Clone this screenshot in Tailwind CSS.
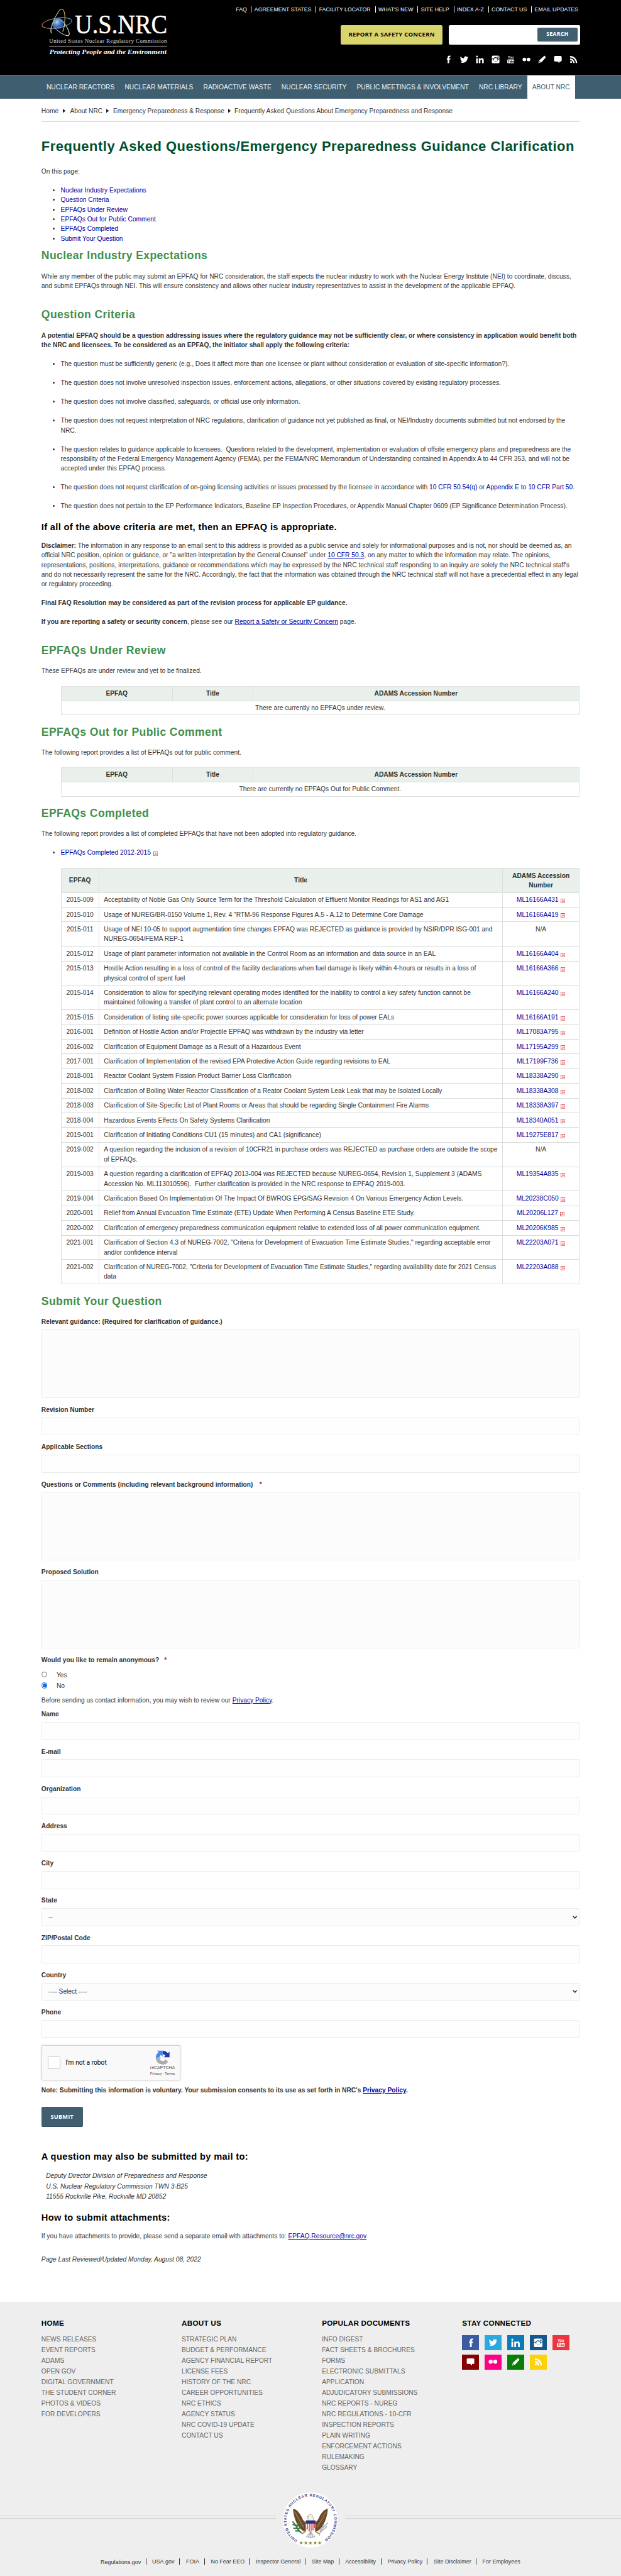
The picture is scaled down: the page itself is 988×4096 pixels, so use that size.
<!DOCTYPE html>
<html lang="en">
<head>
<meta charset="utf-8">
<title>Frequently Asked Questions/Emergency Preparedness Guidance Clarification</title>
<script src="https://cdn.jsdelivr.net/npm/@tailwindcss/browser@4"></script>
</head>
<body class="bg-white w-[988px] h-[4096px] overflow-hidden">
<svg class="hidden">
  <symbol id="fb" viewBox="0 0 24 24"><path d="M14 23h-4.6V12.5H7V8.8h2.4V6.5C9.400 3.200 10.700 1 14.500 1H17.500v3.800h-1.900C14.200 4.800 14 5.400 14 6.400v2.400h3.500l-.4 3.700H14z"/></symbol>
  <symbol id="tw" viewBox="0 0 24 24"><path d="M23.600 4.900a9.700 9.700 0 0 1-2.800.8 4.900 4.900 0 0 0 2.100-2.700 9.700 9.700 0 0 1-3.100 1.200A4.900 4.900 0 0 0 11.500 8.600 13.900 13.900 0 0 1 1.400 3.500a4.900 4.900 0 0 0 1.500 6.500A4.900 4.900 0 0 1 .7 9.400a4.900 4.900 0 0 0 3.900 4.900 4.900 4.900 0 0 1-2.200.1 4.900 4.900 0 0 0 4.600 3.400A9.800 9.800 0 0 1 0 19.800a13.900 13.900 0 0 0 7.500 2.200c9.100 0 14.300-7.700 14-14.600a10 10 0 0 0 2.100-2.500z"/></symbol>
  <symbol id="li" viewBox="0 0 24 24"><path d="M1 8.500h4.600V23H1zM3.300 1a2.700 2.700 0 1 1 0 5.400A2.700 2.700 0 0 1 3.300 1zM8.600 8.500H13v2c.7-1.200 2.200-2.400 4.500-2.400 4.700 0 5.500 3 5.500 7V23h-4.600v-7c0-1.700 0-3.800-2.400-3.800s-2.700 1.800-2.700 3.700V23H8.600z"/></symbol>
  <symbol id="ig" viewBox="0 0 24 24"><path fill-rule="evenodd" d="M4 1h16a3 3 0 0 1 3 3v16a3 3 0 0 1-3 3H4a3 3 0 0 1-3-3V4a3 3 0 0 1 3-3zM1 9.600v1.600h3.600a7.600 7.600 0 0 0 14.800 0H23V9.600h-4.200a7.600 7.600 0 0 0-13.600 0zM12 7.600a5.200 5.200 0 1 0 0 10.400 5.200 5.200 0 0 0 0-10.400zM17.300 3.400v3.400h3.400V3.400z"/></symbol>
  <symbol id="pen" viewBox="0 0 24 24"><path fill-rule="evenodd" d="M18.500 1l4.500 4.300L10.500 19.500 1 23l2.800-8.800zM4.800 16.500l-1.300 4 4-1.500z"/></symbol>
  <symbol id="chat" viewBox="0 0 24 24"><path d="M4 2h16a3 3 0 0 1 3 3v10a3 3 0 0 1-3 3h-3.500v5L11 18H4a3 3 0 0 1-3-3V5a3 3 0 0 1 3-3z"/></symbol>
  <symbol id="fl" viewBox="0 0 24 24"><circle cx="6" cy="12" r="5.300"/><circle cx="18" cy="12" r="5.300"/></symbol>
  <symbol id="rss" viewBox="0 0 24 24"><circle cx="4.700" cy="19.300" r="3"/><path d="M1.700 9v4.200a9.200 9.200 0 0 1 9.100 9.100H15A13.400 13.400 0 0 0 1.700 9zM1.700 1.700v4.200a16.400 16.400 0 0 1 16.400 16.400h4.200A20.600 20.600 0 0 0 1.700 1.700z"/></symbol>
  <symbol id="yt" viewBox="0 0 24 24"><text x="12" y="10" font-size="11" font-weight="bold" font-family="Liberation Sans" text-anchor="middle" textLength="17" lengthAdjust="spacingAndGlyphs">You</text><path fill-rule="evenodd" d="M4 12h16a2 2 0 0 1 2 2v7a2 2 0 0 1-2 2H4a2 2 0 0 1-2-2v-7a2 2 0 0 1 2-2zM4 13.500v1.500h1.500v6H7v-6h1.500v-1.500zM9 16v5h3.500v-5h-1.200v3.800h-1V16zM13.500 13.500V21H17v-5h-2.200v-2.500zM17.800 16v5h3v-1.500h-1.500v-1h1.500V16z"/></symbol>
  <symbol id="pdf" viewBox="0 0 10 10"><rect x=".6" y=".6" width="8.800" height="8.800" fill="#fff" stroke="#e0434b" stroke-width="1.200"/><path d="M2.200 7.800C4 6.500 5 4.500 4.800 2.200 5.200 4.500 6 5.700 7.900 6 6 5.700 4 6.200 2.200 7.800z" fill="none" stroke="#e0434b" stroke-width=".9"/></symbol>
</svg>
<div class="[zoom:0.7317] w-[1351px] h-[5600px] font-['Liberation_Sans',Arial,sans-serif] text-[14px] leading-[21px] text-[#333] whitespace-nowrap">

<header class="bg-black h-[163px] px-[90px] flex justify-between">
  <svg class="w-[300px] h-[133px] -ml-[10px] mt-[10px] overflow-visible" viewBox="0 0 900 400">
    <defs><radialGradient id="g" cx=".35" cy=".35" r=".7"><stop offset="0" stop-color="#b9d0f3"/><stop offset=".5" stop-color="#4a78c4"/><stop offset="1" stop-color="#143a80"/></radialGradient>
    <linearGradient id="o1"><stop offset="0" stop-color="#e2705c"/><stop offset=".5" stop-color="#8899c8"/><stop offset="1" stop-color="#4fa6a4"/></linearGradient>
    <linearGradient id="o2" x1="0" y1="0" x2="0" y2="1"><stop offset="0" stop-color="#f3b45c"/><stop offset=".5" stop-color="#d9cf9a"/><stop offset="1" stop-color="#e8e8e8"/></linearGradient>
    <linearGradient id="o3" x1="0" y1="0" x2="1" y2="1"><stop offset="0" stop-color="#3f8f86"/><stop offset="1" stop-color="#fff"/></linearGradient></defs>
    <circle cx="138" cy="125" r="36" fill="url(#g)"/>
    <g fill="none" stroke-width="4.500">
      <ellipse cx="128" cy="122" rx="98" ry="32" stroke="url(#o1)" transform="rotate(-9 128 122)"/>
      <path d="M92 190C80 160 110 90 140 45C160 15 182 35 181 90C180 130 175 160 166 178" stroke="url(#o2)"/>
      <path d="M92 190C78 140 120 90 150 100C185 120 225 195 203 204C175 208 110 160 96 128" stroke="url(#o3)"/>
    </g>
    <g fill="#fff" font-family="Liberation Serif, serif">
      <text x="246" y="190" font-size="170" stroke="#fff" stroke-width="2" textLength="604" lengthAdjust="spacingAndGlyphs">U.S.NRC</text>
      <text x="78" y="252" font-size="37" fill="#d6d6d6" textLength="770">United States Nuclear Regulatory Commission</text>
      <rect x="78" y="271" width="770" height="4" fill="#aaa"/>
      <text x="80" y="326" font-size="46" font-style="italic" font-weight="bold" textLength="765" lengthAdjust="spacingAndGlyphs">Protecting People and the Environment</text>
    </g>
  </svg>
  <div class="flex flex-col items-end">
    <nav class="mt-[14px] h-[14px] leading-[14px] flex text-[12px] text-white">
      <span class="pr-[9px]">FAQ</span><span class="border-l border-white pl-[6px] pr-[9.500px]">AGREEMENT STATES</span><span class="border-l border-white pl-[6px] pr-[9.500px]">FACILITY LOCATOR</span><span class="border-l border-white pl-[6px] pr-[9.500px]">WHAT'S NEW</span><span class="border-l border-white pl-[6px] pr-[9.500px]">SITE HELP</span><span class="border-l border-white pl-[6px] pr-[9.500px]">INDEX A-Z</span><span class="border-l border-white pl-[6px] pr-[9.500px]">CONTACT US</span><span class="border-l border-white pl-[6px] pr-[4px]">EMAIL UPDATES</span>
    </nav>
    <div class="mt-[27px] flex gap-[14px]">
      <div class="w-[221px] h-[42px] rounded-[3px] bg-[#d9d56c] border-b-2 border-[#b5b15a] text-center leading-[41px] text-[13px] font-bold text-black font-['Open_Sans',sans-serif] tracking-[0.35px]">REPORT A SAFETY CONCERN</div>
      <div class="w-[285px] h-[42px] rounded-[3px] bg-white flex justify-end p-[5px]"><div class="w-[88px] h-[30px] rounded-[3px] border-b-2 border-[#344d5e] bg-[#425f70] text-center leading-[29px] text-[12px] font-bold text-white font-['Open_Sans',sans-serif] tracking-[0.35px]">SEARCH</div></div>
    </div>
    <div class="mt-[23px] mr-[5px] flex gap-[16px] text-white fill-white">
      <svg class="size-[18px]"><use href="#fb"/></svg><svg class="size-[18px]"><use href="#tw"/></svg><svg class="size-[18px]"><use href="#li"/></svg><svg class="size-[18px]"><use href="#ig"/></svg><svg class="size-[18px]"><use href="#yt"/></svg><svg class="size-[18px]"><use href="#fl"/></svg><svg class="size-[18px]"><use href="#pen"/></svg><svg class="size-[18px]"><use href="#chat"/></svg><svg class="size-[18px]"><use href="#rss"/></svg>
    </div>
  </div>
</header>

<nav class="bg-[#3f5f71] border-t border-[#55717f] h-[51px] leading-[53px] px-[90px] flex text-[#eef5fa]">
  <span class="px-[11px]">NUCLEAR REACTORS</span><span class="px-[11px]">NUCLEAR MATERIALS</span><span class="px-[11px]">RADIOACTIVE WASTE</span><span class="px-[11px]">NUCLEAR SECURITY</span><span class="px-[11px]">PUBLIC MEETINGS &amp; INVOLVEMENT</span><span class="px-[11px]">NRC LIBRARY</span><span class="px-[11px] bg-white text-[#3f5f71] -mt-px h-[51px]">ABOUT NRC</span>
</nav>

<main class="w-[1350px] px-[90px] pt-[17px] h-[4788px]">
  <div class="h-[21px] flex items-center">
    <span>Home</span><svg class="w-[6px] h-[9px] ml-[9px] mr-[10px]" viewBox="0 0 6 9"><path d="M0 0l6 4.500L0 9z" fill="#222"/></svg><span>About NRC</span><svg class="w-[6px] h-[9px] ml-[8px] mr-[9px]" viewBox="0 0 6 9"><path d="M0 0l6 4.500L0 9z" fill="#222"/></svg><span>Emergency Preparedness &amp; Response</span><svg class="w-[6px] h-[9px] ml-[8px] mr-[8px]" viewBox="0 0 6 9"><path d="M0 0l6 4.500L0 9z" fill="#222"/></svg><span>Frequently Asked Questions About Emergency Preparedness and Response</span>
  </div>
  <div class="mt-[11px] h-[2px] bg-[#dcdfdd]"></div>
  <h1 class="mt-[36.500px] h-[34px] leading-[34px] text-[30px] font-bold text-[#00502f] tracking-[0.7px]">Frequently Asked Questions/Emergency Preparedness Guidance Clarification</h1>
  <p class="mt-[26.500px]">On this page:</p>
  <ul class="mt-[20px] pl-[42px] list-disc text-[#0000a0] marker:text-[#333]">
    <li>Nuclear Industry Expectations</li><li>Question Criteria</li><li>EPFAQs Under Review</li><li>EPFAQs Out for Public Comment</li><li>EPFAQs Completed</li><li>Submit Your Question</li>
  </ul>
  <h2 class="mt-[12.500px] h-[28px] leading-[28px] text-[24px] font-bold text-[#42904c] tracking-[0.56px]">Nuclear Industry Expectations</h2>
  <p class="mt-[20.500px]">While any member of the public may submit an EPFAQ for NRC consideration, the staff expects the nuclear industry to work with the Nuclear Energy Institute (NEI) to coordinate, discuss,<br>and submit EPFAQs through NEI. This will ensure consistency and allows other nuclear industry representatives to assist in the development of the applicable EPFAQ.</p>
  <h2 class="mt-[38px] h-[28px] leading-[28px] text-[24px] font-bold text-[#42904c] tracking-[0.56px]">Question Criteria</h2>
  <p class="mt-[21px] font-bold">A potential EPFAQ should be a question addressing issues where the regulatory guidance may not be sufficiently clear, or where consistency in application would benefit both<br>the NRC and licensees. To be considered as an EPFAQ, the initiator shall apply the following criteria:</p>
  <ul class="mt-[20px] pl-[42px] list-disc flex flex-col gap-[20px]">
    <li>The question must be sufficiently generic (e.g., Does it affect more than one licensee or plant without consideration or evaluation of site-specific information?).</li>
    <li>The question does not involve unresolved inspection issues, enforcement actions, allegations, or other situations covered by existing regulatory processes.</li>
    <li>The question does not involve classified, safeguards, or official use only information.</li>
    <li>The question does not request interpretation of NRC regulations, clarification of guidance not yet published as final, or NEI/Industry documents submitted but not endorsed by the<br>NRC.</li>
    <li>The question relates to guidance applicable to licensees.&nbsp; Questions related to the development, implementation or evaluation of offsite emergency plans and preparedness are the<br>responsibility of the Federal Emergency Management Agency (FEMA), per the FEMA/NRC Memorandum of Understanding contained in Appendix A to 44 CFR 353, and will not be<br>accepted under this EPFAQ process.</li>
    <li>The question does not request clarification of on-going licensing activities or issues processed by the licensee in accordance with <a class="text-[#0000a0]">10 CFR 50.54(q)</a> or <a class="text-[#0000a0]">Appendix E to 10 CFR Part 50</a>.</li>
    <li>The question does not pertain to the EP Performance Indicators, Baseline EP Inspection Procedures, or Appendix Manual Chapter 0609 (EP Significance Determination Process).</li>
  </ul>
  <h3 class="mt-[23px] h-[26px] leading-[26px] text-[20px] font-bold text-black tracking-[0.47px]">If all of the above criteria are met, then an EPFAQ is appropriate.</h3>
  <p class="mt-[15.500px]"><b>Disclaimer:</b> The information in any response to an email sent to this address is provided as a public service and solely for informational purposes and is not, nor should be deemed as, an<br>official NRC position, opinion or guidance, or "a written interpretation by the General Counsel" under <a class="text-[#0000a0] underline">10 CFR 50.3</a>, on any matter to which the information may relate. The opinions,<br>representations, positions, interpretations, guidance or recommendations which may be expressed by the NRC technical staff responding to an inquiry are solely the NRC technical staff's<br>and do not necessarily represent the same for the NRC. Accordingly, the fact that the information was obtained through the NRC technical staff will not have a precedential effect in any legal<br>or regulatory proceeding.</p>
  <p class="mt-[20px] font-bold">Final FAQ Resolution may be considered as part of the revision process for applicable EP guidance.</p>
  <p class="mt-[20px]"><b>If you are reporting a safety or security concern</b>, please see our <a class="text-[#0000a0] underline">Report a Safety or Security Concern</a> page.</p>

  <h2 class="mt-[38px] h-[28px] leading-[28px] text-[24px] font-bold text-[#42904c] tracking-[0.56px]">EPFAQs Under Review</h2>
  <p class="mt-[20px]">These EPFAQs are under review and yet to be finalized.</p>
  <div class="mt-[22px] ml-[42px] h-[63px] border border-[#dfe3e0] text-center flex flex-col">
    <div class="grid grid-cols-[241px_175px_1fr] h-[31px] leading-[31px] bg-[#e9f0eb] border-b border-[#dcdfdd] font-bold text-[#2b3330]"><span>EPFAQ</span><span class="border-l border-[#dcdfdd]">Title</span><span class="border-l border-[#dcdfdd]">ADAMS Accession Number</span></div>
    <div class="leading-[31px]">There are currently no EPFAQs under review.</div>
  </div>
  <h2 class="mt-[23px] h-[28px] leading-[28px] text-[24px] font-bold text-[#42904c] tracking-[0.56px]">EPFAQs Out for Public Comment</h2>
  <p class="mt-[20px]">The following report provides a list of EPFAQs out for public comment.</p>
  <div class="mt-[22px] ml-[42px] h-[63px] border border-[#dfe3e0] text-center flex flex-col">
    <div class="grid grid-cols-[241px_175px_1fr] h-[31px] leading-[31px] bg-[#e9f0eb] border-b border-[#dcdfdd] font-bold text-[#2b3330]"><span>EPFAQ</span><span class="border-l border-[#dcdfdd]">Title</span><span class="border-l border-[#dcdfdd]">ADAMS Accession Number</span></div>
    <div class="leading-[31px]">There are currently no EPFAQs Out for Public Comment.</div>
  </div>
  <h2 class="mt-[23px] h-[28px] leading-[28px] text-[24px] font-bold text-[#42904c] tracking-[0.56px]">EPFAQs Completed</h2>
  <p class="mt-[20px]">The following report provides a list of completed EPFAQs that have not been adopted into regulatory guidance.</p>
  <ul class="mt-[20px] pl-[42px] list-disc text-[#0000a0] marker:text-[#333]"><li>EPFAQs Completed 2012-2015 <svg class="inline size-[10px] ml-px -mb-[3px]"><use href="#pdf"/></svg></li></ul>
  <div class="mt-[22px] ml-[42px] border-x border-t border-[#dcdfdd]">
    <div class="grid grid-cols-[81px_878px_1fr] h-[53px] bg-[#e9f0eb] border-b border-[#dcdfdd] font-bold text-center text-[#2b3330] items-stretch"><span class="leading-[53px]">EPFAQ</span><span class="border-l border-[#dcdfdd] leading-[53px]">Title</span><span class="border-l border-[#dcdfdd] pt-[5px]">ADAMS Accession<br>Number</span></div>
    <div id="rows"></div>
  </div>

  <h2 class="mt-[23px] h-[28px] leading-[28px] text-[24px] font-bold text-[#42904c] tracking-[0.56px]">Submit Your Question</h2>
  <div class="mt-[20.500px]" id="f1"></div>
  <p class="font-bold">Would you like to remain anonymous? <span class="text-[#c8102e] ml-[7px]">*</span></p>
  <div class="mt-[12px] h-[23px] flex"><span class="size-[13px] mt-[2px] mr-[20px] rounded-full border border-[#767676] bg-white"></span>Yes</div>
  <div class="h-[21px] flex"><span class="size-[13px] mt-[3px] mr-[20px] rounded-full border-[1.500px] border-[#0a6cf0] bg-white flex items-center justify-center"><span class="size-[8px] rounded-full bg-[#0a6cf0]"></span></span>No</div>
  <p class="mt-[10px]">Before sending us contact information, you may wish to review our <a class="text-[#0000a0] underline">Privacy Policy</a>.</p>
  <div class="mt-[10px]" id="f2"></div>
  <div class="mt-px w-[302px] h-[76px] rounded-[3px] border border-[#d3d3d3] bg-[#f9f9f9] shadow-[0_0_4px_1px_rgba(0,0,0,0.08)] flex items-center font-[Roboto,sans-serif] text-black">
    <span class="ml-[12px] size-[28px] rounded-[2px] border-2 border-[#c1c1c1] bg-white"></span>
    <span class="ml-[11px] w-[181px]">I'm not a robot</span>
    <div class="w-[60px] flex flex-col items-center text-[#555]">
      <svg class="size-[32px] mt-[2px]" viewBox="0 0 32 32"><path d="M31 15.500V3l-3.600 3.600A15 15 0 0 0 16 1v7.500a7 7 0 0 1 6 3.400L18.500 15.500z" fill="#1c3aa9"/><path d="M16 1H4l3.400 3.600A15 15 0 0 0 1 16h8a7 7 0 0 1 3.200-5.800L16 14z" fill="#4285f4"/><path d="M1 16a15 15 0 0 0 27 9l-5.500-5.200A7.200 7.200 0 0 1 9.500 19l4-3z" fill="#ababab"/></svg>
      <span class="text-[10px] leading-[12px] mt-px">reCAPTCHA</span><span class="text-[8px] leading-[11px]">Privacy - Terms</span>
    </div>
  </div>
  <p class="mt-[11px] font-bold">Note: Submitting this information is voluntary. Your submission consents to its use as set forth in NRC's <a class="text-[#0000a0] underline">Privacy Policy</a>.</p>
  <div class="mt-[26px] w-[90px] h-[44px] rounded-[3px] bg-[#425f70] border-b-2 border-[#344d5e] text-center leading-[43px] text-[12.500px] font-bold text-white font-['Open_Sans',sans-serif] tracking-[0.35px]">SUBMIT</div>
  <h3 class="mt-[52px] h-[26px] leading-[26px] text-[20px] font-bold text-black tracking-[0.47px]">A question may also be submitted by mail to:</h3>
  <address class="mt-[17.500px] ml-[10px] leading-[22.400px] italic">Deputy Director Division of Preparedness and Response<br>U.S. Nuclear Regulatory Commission TWN 3-B25<br>11555 Rockville Pike, Rockville MD 20852</address>
  <h3 class="mt-[21.500px] h-[26px] leading-[26px] text-[20px] font-bold text-black tracking-[0.47px]">How to submit attachments:</h3>
  <p class="mt-[16.800px]">If you have attachments to provide, please send a separate email with attachments to: <a class="text-[#0000a0] underline">EPFAQ.Resource@nrc.gov</a></p>
  <p class="mt-[29.500px] italic">Page Last Reviewed/Updated Monday, August 08, 2022</p>
</main>

<footer class="bg-[#eeeeee] h-[600px]">
  <div class="px-[90px] pt-[36.500px] h-[414px] grid grid-cols-[305px_305px_305px_1fr] leading-[23.300px] text-[#666]">
    <div><h4 class="h-[20px] leading-[20px] mb-[13px] text-[16px] font-bold text-black tracking-[0.35px]">HOME</h4>NEWS RELEASES<br>EVENT REPORTS<br>ADAMS<br>OPEN GOV<br>DIGITAL GOVERNMENT<br>THE STUDENT CORNER<br>PHOTOS &amp; VIDEOS<br>FOR DEVELOPERS</div>
    <div><h4 class="h-[20px] leading-[20px] mb-[13px] text-[16px] font-bold text-black tracking-[0.35px]">ABOUT US</h4>STRATEGIC PLAN<br>BUDGET &amp; PERFORMANCE<br>AGENCY FINANCIAL REPORT<br>LICENSE FEES<br>HISTORY OF THE NRC<br>CAREER OPPORTUNITIES<br>NRC ETHICS<br>AGENCY STATUS<br>NRC COVID-19 UPDATE<br>CONTACT US</div>
    <div><h4 class="h-[20px] leading-[20px] mb-[13px] text-[16px] font-bold text-black tracking-[0.35px]">POPULAR DOCUMENTS</h4>INFO DIGEST<br>FACT SHEETS &amp; BROCHURES<br>FORMS<br>ELECTRONIC SUBMITTALS<br>APPLICATION<br>ADJUDICATORY SUBMISSIONS<br>NRC REPORTS - NUREG<br>NRC REGULATIONS - 10-CFR<br>INSPECTION REPORTS<br>PLAIN WRITING<br>ENFORCEMENT ACTIONS<br>RULEMAKING<br>GLOSSARY</div>
    <div><h4 class="h-[20px] leading-[20px] mb-[16px] text-[16px] font-bold text-black tracking-[0.35px]">STAY CONNECTED</h4>
      <div class="grid grid-cols-[repeat(5,37px)] gap-x-[12px] gap-y-[9px] fill-white">
        <span class="h-[33px] bg-[#3b5ca0] grid place-items-center"><svg class="size-[20px]"><use href="#fb"/></svg></span>
        <span class="h-[33px] bg-[#2ba9e1] grid place-items-center"><svg class="size-[18px]"><use href="#tw"/></svg></span>
        <span class="h-[33px] bg-[#0a7ab8] grid place-items-center"><svg class="size-[20px]"><use href="#li"/></svg></span>
        <span class="h-[33px] bg-[#17568a] grid place-items-center"><svg class="size-[20px]"><use href="#ig"/></svg></span>
        <span class="h-[33px] bg-[#ee3640] grid place-items-center"><svg class="size-[20px]"><use href="#yt"/></svg></span>
        <span class="h-[33px] bg-[#850000] grid place-items-center"><svg class="size-[18px]"><use href="#chat"/></svg></span>
        <span class="h-[33px] bg-[#ff0084] grid place-items-center"><svg class="size-[20px]"><use href="#fl"/></svg></span>
        <span class="h-[33px] bg-[#087d08] grid place-items-center"><svg class="size-[18px]"><use href="#pen"/></svg></span>
        <span class="h-[33px] bg-[#ffd10a] grid place-items-center"><svg class="size-[18px]"><use href="#rss"/></svg></span>
      </div>
    </div>
  </div>
  <div class="w-[1350px] h-[120px] flex items-start">
    <div class="flex-1 mt-[51px] h-[6px] border-y-2 border-[#d6d6d6]"></div>
    <svg class="w-[120px] h-[120px] mx-[15px]" viewBox="0 0 120 120">
      <circle cx="60" cy="60" r="60" fill="#fff"/>
      <path id="ring" d="M31.500 104.500A52 52 0 1 1 88.500 104.500" fill="none"/>
      <text font-family="Liberation Sans" font-weight="bold" font-size="8" fill="#3b3b86"><textPath href="#ring" textLength="263">UNITED STATES NUCLEAR REGULATORY COMMISSION</textPath></text>
      <path d="M22 36C30 36 38 46 44 60L50 66V84L44 84C34 78 24 60 22 36zM98 36C90 36 82 46 76 60L70 66V84L76 84C86 78 96 60 98 36z" fill="#6b4a2a"/>
      <path d="M26 42C32 52 38 66 46 76M94 42C88 52 82 66 74 76" stroke="#b08a55" stroke-width="1.500" fill="none"/>
      <path d="M50 84L42 90M70 84L78 90" stroke="#b5852f" stroke-width="2.500"/>
      <path d="M55 62C53 54 55 48 60 48C65 48 67 54 66 62z" fill="#f4f1ea" stroke="#8a8070" stroke-width=".8"/><path d="M56 51l-4 1.500 3 2z" fill="#d8a020"/>
      <path d="M50 62h21v12c0 6-6 10-10.500 12C56 84 50 80 50 74z" fill="#fff" stroke="#a33" stroke-width=".6"/>
      <path d="M53.500 67v13M57.500 67v17M61.500 67v17M65.500 67v15M69 67v11" stroke="#c8343f" stroke-width="1.800"/>
      <path d="M50 61h21v7H50z" fill="#2b3380"/>
      <path d="M60.500 86L51 96q9.500 5 19 0zM60.500 86v12M60.500 86l-5 11M60.500 86l5 11" fill="#eee" stroke="#777" stroke-width=".9"/>
      <path d="M22 64l6 8 6 10 6 6M22 70l8 2M34 66l-3 8M24 78l8 0M38 74l-4 6M28 84l7 0" stroke="#3c7d46" stroke-width="3" fill="none" stroke-linecap="round"/>
      <path d="M98 66L82 82l-3 12M96 74L80 88M88 70l-4 12" stroke="#aaa" stroke-width="2" fill="none"/>
      <text x="60" y="114" text-anchor="middle" font-size="11" fill="#8f8f3f" font-family="DejaVu Sans" textLength="50">★★★★★</text>
    </svg>
    <div class="flex-1 mt-[51px] h-[6px] border-y-2 border-[#d6d6d6]"></div>
  </div>
  <div class="w-[1350px] mt-[24px] flex justify-center text-[12.250px] leading-[14px] h-[14px]">
    <span class="pr-[10px] pt-px">Regulations.gov</span><span class="border-l border-[#333] pl-[13px] pr-[11px]">USA.gov</span><span class="border-l border-[#333] pl-[13px] pr-[11px]">FOIA</span><span class="border-l border-[#333] pl-[13px] pr-[10px]">No Fear EEO</span><span class="border-l border-[#333] pl-[13px] pr-[10px]">Inspector General</span><span class="border-l border-[#333] pl-[13px] pr-[10px]">Site Map</span><span class="border-l border-[#333] pl-[13px] pr-[11px]">Accessibility</span><span class="border-l border-[#333] pl-[13px] pr-[10px]">Privacy Policy</span><span class="border-l border-[#333] pl-[13px] pr-[10px]">Site Disclaimer</span><span class="border-l border-[#333] pl-[13px]">For Employees</span>
  </div>
</footer>
</div>
<script>
const rows = [
["2015-009","Acceptability of Noble Gas Only Source Term for the Threshold Calculation of Effluent Monitor Readings for AS1 and AG1","ML16166A431"],
["2015-010","Usage of NUREG/BR-0150 Volume 1, Rev. 4 \"RTM-96 Response Figures A.5 - A.12 to Determine Core Damage","ML16166A419"],
["2015-011","Usage of NEI 10-05 to support augmentation time changes EPFAQ was REJECTED as guidance is provided by NSIR/DPR ISG-001 and<br>NUREG-0654/FEMA REP-1",""],
["2015-012","Usage of plant parameter information not available in the Control Room as an information and data source in an EAL","ML16166A404"],
["2015-013","Hostile Action resulting in a loss of control of the facility declarations when fuel damage is likely within 4-hours or results in a loss of<br>physical control of spent fuel","ML16166A366"],
["2015-014","Consideration to allow for specifying relevant operating modes identified for the inability to control a key safety function cannot be<br>maintained following a transfer of plant control to an alternate location","ML16166A240"],
["2015-015","Consideration of listing site-specific power sources applicable for consideration for loss of power EALs","ML16166A191"],
["2016-001","Definition of Hostile Action and/or Projectile EPFAQ was withdrawn by the industry via letter","ML17083A795"],
["2016-002","Clarification of Equipment Damage as a Result of a Hazardous Event","ML17195A299"],
["2017-001","Clarification of Implementation of the revised EPA Protective Action Guide regarding revisions to EAL","ML17199F736"],
["2018-001","Reactor Coolant System Fission Product Barrier Loss Clarification","ML18338A290"],
["2018-002","Clarification of Boiling Water Reactor Classification of a Reator Coolant System Leak Leak that may be Isolated Locally","ML18338A308"],
["2018-003","Clarification of Site-Specific List of Plant Rooms or Areas that should be regarding Single Containment Fire Alarms","ML18338A397"],
["2018-004","Hazardous Events Effects On Safety Systems Clarification","ML18340A051"],
["2019-001","Clarification of Initiating Conditions CU1 (15 minutes) and CA1 (significance)","ML19275E817"],
["2019-002","A question regarding the inclusion of a revision of 10CFR21 in purchase orders was REJECTED as purchase orders are outside the scope<br>of EPFAQs.",""],
["2019-003","A question regarding a clarification of EPFAQ 2013-004 was REJECTED because NUREG-0654, Revision 1, Supplement 3 (ADAMS<br>Accession No. ML113010596).&nbsp; Further clarification is provided in the NRC response to EPFAQ 2019-003.","ML19354A835"],
["2019-004","Clarification Based On Implementation Of The Impact Of BWROG EPG/SAG Revision 4 On Various Emergency Action Levels.","ML20238C050"],
["2020-001","Relief from Annual Evacuation Time Estimate (ETE) Update When Performing A Census Baseline ETE Study.","ML20206L127"],
["2020-002","Clarification of emergency preparedness communication equipment relative to extended loss of all power communication equipment.","ML20206K985"],
["2021-001","Clarification of Section 4.3 of NUREG-7002, \"Criteria for Development of Evacuation Time Estimate Studies,\" regarding acceptable error<br>and/or confidence interval","ML22203A071"],
["2021-002","Clarification of NUREG-7002, \"Criteria for Development of Evacuation Time Estimate Studies,\" regarding availability date for 2021 Census<br>data","ML22203A088"]];
document.getElementById('rows').innerHTML = rows.map(([id, t, ml]) =>
  `<div class="grid grid-cols-[81px_878px_1fr] border-b border-[#d6dad8] ${t.includes('<br>') ? 'h-[53px]' : 'h-[32px]'}"><span class="pt-[5px] text-center">${id}</span><span class="pt-[5px] pl-[10px] border-l border-[#dcdfdd]">${t}</span><span class="pt-[5px] text-center border-l border-[#dcdfdd]">${ml ? `<a class="text-[#0000a0]">${ml}</a> <svg class="inline size-[10px] ml-px -mb-[3px]"><use href="#pdf"/></svg>` : 'N/A'}</span></div>`).join('');
const field = ([label, kind, req]) => {
  const star = req ? '<span class="text-[#c8102e] ml-[14px]">*</span>' : '';
  const box = kind === 'area' ? '<div class="h-[149px] rounded-[3px] border border-[#e9ebea] bg-[#fcfcfc]"></div>'
    : kind ? `<div class="h-[39px] rounded-[2px] border border-[#e9ebea] bg-[#fcfcfc] flex items-center justify-between pl-[14px] pr-[3px]"><span>${kind}</span><svg class="w-[10px] h-[7px]" viewBox="0 0 10 7"><path d="M1 1l4 4.500L9 1" fill="none" stroke="#222" stroke-width="2"/></svg></div>`
    : '<div class="h-[39px] rounded-[3px] border border-[#e9ebea] bg-[#fefefe]"></div>';
  return `<div class="pb-[15px]"><div class="font-bold mb-[6px]">${label}${star}</div>${box}</div>`;
};
document.getElementById('f1').innerHTML = [["Relevant guidance: (Required for clarification of guidance.)","area"],["Revision Number"],["Applicable Sections"],["Questions or Comments (including relevant background information)","area",1],["Proposed Solution","area"]].map(field).join('');
document.getElementById('f2').innerHTML = [["Name"],["E-mail"],["Organization"],["Address"],["City"],["State","--"],["ZIP/Postal Code"],["Country","---- Select ----"],["Phone"]].map(field).join('');
</script>
</body>
</html>
